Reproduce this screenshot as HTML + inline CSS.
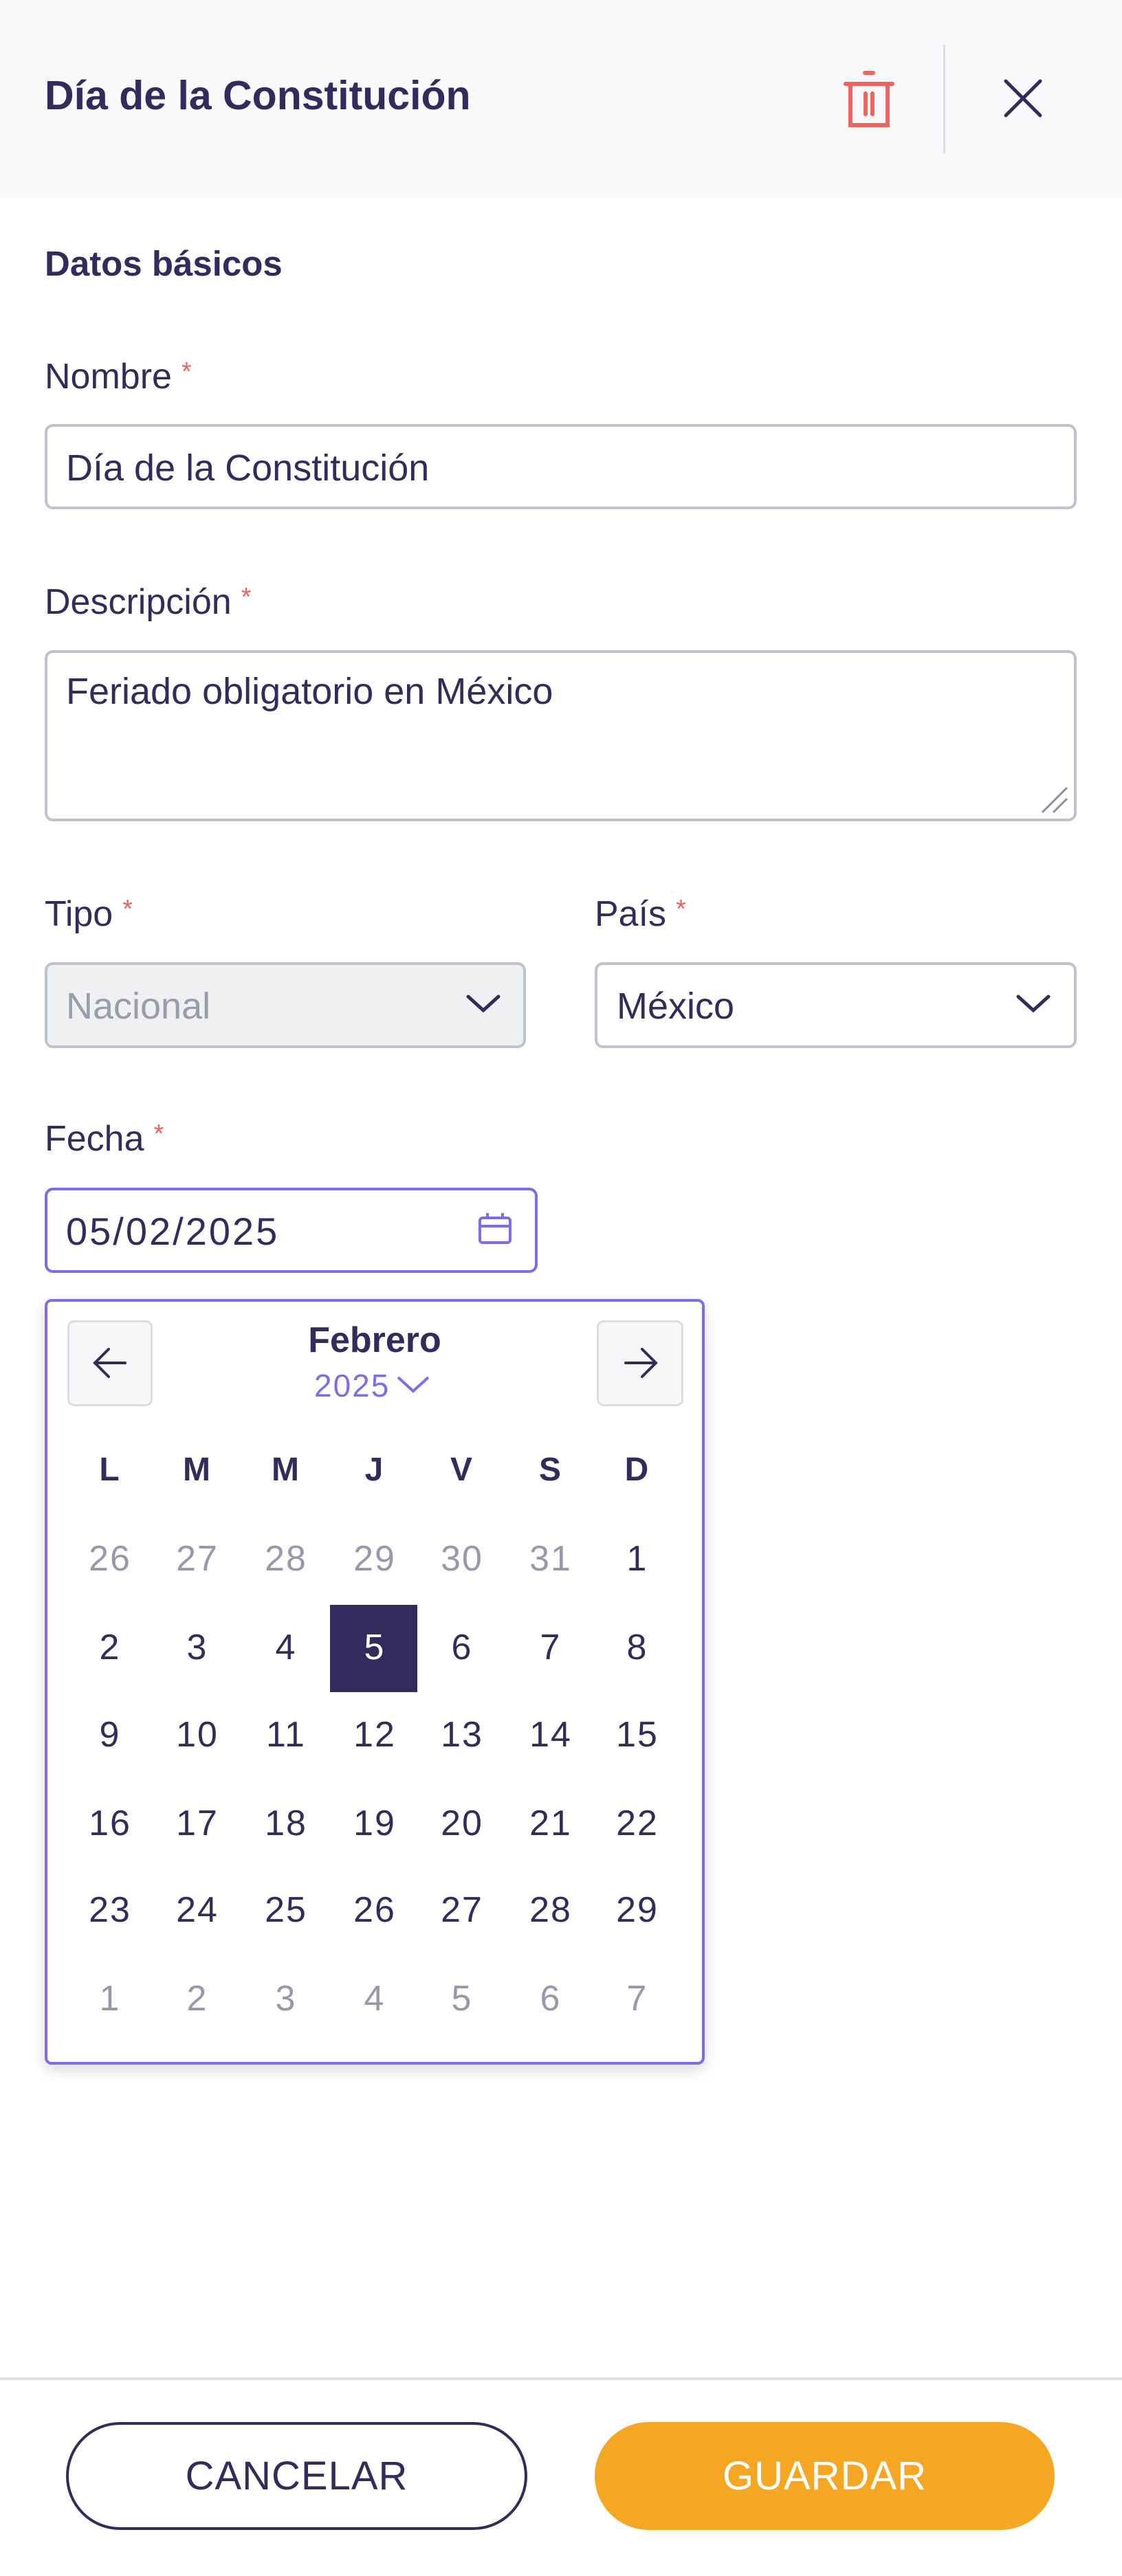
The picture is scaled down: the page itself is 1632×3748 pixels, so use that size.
<!DOCTYPE html>
<html><head><meta charset="utf-8"><style>
*{box-sizing:border-box;margin:0;padding:0}
body{width:1632px;height:3748px;background:#fff;font-family:"Liberation Sans",sans-serif;color:#332b5c;position:relative;overflow:hidden}
.a{position:absolute}
.hdr{left:0;top:0;width:1632px;height:287px;background:#f8f9fb}
.lbl{font-size:52px;left:65px;line-height:1}
.lbl span{color:#f0625f;font-size:38px;vertical-align:top;margin-left:14px}
.inp{border:4px solid #bcc3cc;border-radius:12px;background:#fff}
.txt{font-size:54px;line-height:1}
.day{width:128px;text-align:center;font-size:52px;line-height:1;transform:translate(-64px,-26px);letter-spacing:2px}
.g{color:#9a97ad}
</style></head><body>
<div class="a hdr"></div>
<div class="a" style="left:65px;top:110px;font-size:59px;font-weight:bold;line-height:1">Día de la Constitución</div>
<svg class="a" style="left:1222px;top:96px" width="84" height="92" viewBox="0 0 84 92"><g fill="none" stroke="#f0625f" stroke-width="6" stroke-linecap="round"><path d="M8 26H76"/><path d="M36 10H48"/><path d="M15 26V86H69V26"/><path d="M37 40V70M47 40V70"/></g></svg>
<div class="a" style="left:1372px;top:65px;width:3px;height:158px;background:#dcdde2"></div>
<svg class="a" style="left:1455px;top:110px" width="66" height="66" viewBox="0 0 66 66"><path d="M8 8L58 58M58 8L8 58" stroke="#332b5c" stroke-width="5" stroke-linecap="round"/></svg>

<div class="a" style="left:65px;top:358px;font-size:51px;font-weight:bold;line-height:1">Datos básicos</div>

<div class="a lbl" style="top:522px">Nombre<span>*</span></div>
<div class="a inp" style="left:65px;top:617px;width:1501px;height:124px"></div>
<div class="a txt" style="left:96px;top:654px">Día de la Constitución</div>

<div class="a lbl" style="top:850px">Descripción<span>*</span></div>
<div class="a inp" style="left:65px;top:946px;width:1501px;height:249px"></div>
<div class="a txt" style="left:96px;top:979px">Feriado obligatorio en México</div>
<svg class="a" style="left:1508px;top:1138px" width="50" height="50"><path d="M8 44L44 8M24 44L44 24" stroke="#8a8f99" stroke-width="3"/></svg>

<div class="a lbl" style="top:1304px">Tipo<span>*</span></div>
<div class="a inp" style="left:65px;top:1400px;width:700px;height:125px;background:#eff0f2"></div>
<div class="a txt" style="left:96px;top:1437px;color:#9a9cab">Nacional</div>
<svg class="a" style="left:675px;top:1442px" width="56" height="36"><path d="M6 8L28 28L50 8" fill="none" stroke="#332b5c" stroke-width="5" stroke-linecap="round"/></svg>

<div class="a lbl" style="left:865px;top:1304px">País<span>*</span></div>
<div class="a inp" style="left:865px;top:1400px;width:701px;height:125px"></div>
<div class="a txt" style="left:897px;top:1437px">México</div>
<svg class="a" style="left:1475px;top:1442px" width="56" height="36"><path d="M6 8L28 28L50 8" fill="none" stroke="#332b5c" stroke-width="5" stroke-linecap="round"/></svg>

<div class="a lbl" style="top:1631px">Fecha<span>*</span></div>
<div class="a inp" style="left:65px;top:1728px;width:717px;height:124px;border-color:#7b6fe8"></div>
<div class="a txt" style="left:96px;top:1764px;font-size:56px;letter-spacing:3px">05/02/2025</div>
<svg class="a" style="left:692px;top:1760px" width="56" height="56" viewBox="0 0 56 56"><g fill="none" stroke="#7b6fe8" stroke-width="4"><rect x="6" y="12" width="44" height="36" rx="4"/><path d="M6 24H50M17 5V14M39 5V14"/></g></svg>

<div class="a" style="left:65px;top:1890px;width:960px;height:1114px;border:4px solid #7b6fe8;border-radius:10px;background:#fff;box-shadow:0 8px 20px rgba(60,60,100,.18)"></div>
<div class="a" style="left:98px;top:1921px;width:124px;height:125px;border:3px solid #dcdde2;border-radius:10px;background:#f6f7f9"></div>
<svg class="a" style="left:130px;top:1955px" width="60" height="56"><path d="M52 28H8M28 8L8 28L28 48" fill="none" stroke="#332b5c" stroke-width="4" stroke-linecap="round"/></svg>
<div class="a" style="left:868px;top:1921px;width:126px;height:125px;border:3px solid #dcdde2;border-radius:10px;background:#f6f7f9"></div>
<svg class="a" style="left:902px;top:1955px" width="60" height="56"><path d="M8 28H52M32 8L52 28L32 48" fill="none" stroke="#332b5c" stroke-width="4" stroke-linecap="round"/></svg>
<div class="a" style="left:345px;top:1924px;width:400px;text-align:center;font-size:52px;font-weight:bold;line-height:1">Febrero</div>
<div class="a" style="left:457px;top:1993px;font-size:46px;color:#7b6fe8;line-height:1;letter-spacing:2px">2025</div>
<svg class="a" style="left:575px;top:2000px" width="52" height="30"><path d="M4 4L26 24L48 4" fill="none" stroke="#7b6fe8" stroke-width="4"/></svg>

<div class="a" style="left:480px;top:2335px;width:127px;height:127px;background:#332b5c"></div>
<div id="cal"></div>
<script>
var xs=[160,287,416,545,672,801,927],ys=[2141,2268,2397,2524,2653,2779,2908];
var rows=[["L","M","M","J","V","S","D"],["26","27","28","29","30","31","1"],["2","3","4","5","6","7","8"],["9","10","11","12","13","14","15"],["16","17","18","19","20","21","22"],["23","24","25","26","27","28","29"],["1","2","3","4","5","6","7"]];
var h="";
for(var r=0;r<7;r++)for(var c=0;c<7;c++){var cls="a day";var st="";
if(r==0)st="font-weight:bold;font-size:48px;";
if((r==1&&c<6)||r==6)cls+=" g";
if(r==2&&c==3)st="color:#fff;";
h+='<div class="'+cls+'" style="'+st+'left:'+xs[c]+'px;top:'+ys[r]+'px">'+rows[r][c]+'</div>';}
document.getElementById("cal").innerHTML=h;
</script>

<div class="a" style="left:0;top:3459px;width:1632px;height:4px;background:#dcdfe3"></div>
<div class="a" style="left:96px;top:3524px;width:671px;height:157px;border:4px solid #332b5c;border-radius:80px;text-align:center;line-height:149px;font-size:58px;letter-spacing:1px">CANCELAR</div>
<div class="a" style="left:865px;top:3524px;width:669px;height:157px;background:#f5a623;border-radius:80px;text-align:center;line-height:157px;font-size:58px;letter-spacing:1px;color:#fff">GUARDAR</div>
</body></html>
